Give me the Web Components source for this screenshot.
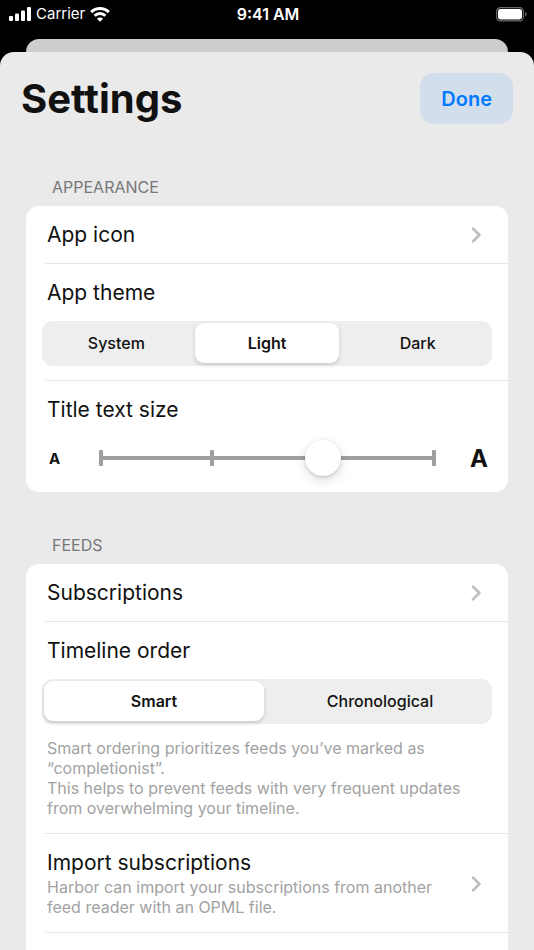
<!DOCTYPE html>
<html lang="en">
  <head>
    <meta charset="UTF-8" />
    <meta name="viewport" content="width=device-width, initial-scale=1" />
    <title>Settings</title>
    <style>
      :root {
        --color-text: #111111;
        --color-muted: #a2a2a2;
        --color-label: #77777a;
        --color-sheet: #eaeaea;
        --color-card: #ffffff;
        --color-line: #e6e6e6;
        --color-blue: #007aff;
      }

      body {
        margin: 0;
        min-height: 100vh;
        display: flex;
        flex-direction: column;
        background: #000000;
        color: var(--color-text);
        font-family: Inter, "Liberation Sans", sans-serif;
      }
    </style>
  </head>
  <body>
    <status-bar carrier="Carrier" time="9:41 AM"></status-bar>
    <settings-sheet heading="Settings">
      <settings-group label="Appearance">
        <settings-link label="App icon"></settings-link>
        <settings-row label="App theme">
          <segmented-control
            label="App theme"
            options="System,Light,Dark"
            value="Light"
          ></segmented-control>
        </settings-row>
        <settings-row label="Title text size">
          <text-size-slider label="Title text size" steps="4" value="2"></text-size-slider>
        </settings-row>
      </settings-group>
      <settings-group label="Feeds" open-ended>
        <settings-link label="Subscriptions"></settings-link>
        <settings-row label="Timeline order">
          <segmented-control
            label="Timeline order"
            options="Smart,Chronological"
            value="Smart"
          ></segmented-control>
          <span slot="note">Smart ordering prioritizes feeds you’ve marked as “completionist”.<br />This helps to prevent feeds with very frequent updates from overwhelming your timeline.</span>
        </settings-row>
        <settings-link label="Import subscriptions">
          Harbor can import your subscriptions from another feed reader with an OPML file.
        </settings-link>
        <settings-spacer></settings-spacer>
      </settings-group>
    </settings-sheet>

    <script>
      /* Status Bar Component */
      class StatusBar extends HTMLElement {
        constructor() {
          super();
          this.attachShadow({ mode: "open" });
        }

        connectedCallback() {
          this.render();
        }

        get styles() {
          return `
            <style>
              :host {
                display: grid;
                grid-template-columns: 1fr auto 1fr;
                align-items: center;
                height: 28px;
                padding: 0 7px 11px 9px;
                color: #ffffff;
                font-size: 16px;
                line-height: 20px;
              }

              svg {
                display: block;
              }

              .carrier {
                display: flex;
                align-items: center;
                gap: 5px;
              }

              .carrier span {
                font-size: 15px;
              }

              .time {
                font-weight: 600;
              }

              .battery {
                justify-self: end;
              }
            </style>
          `;
        }

        render() {
          this.shadowRoot.innerHTML = `
            ${this.styles}
            <div class="carrier">
              <svg width="22" height="14" viewBox="0 0 22 14" fill="#fff" aria-hidden="true">
                <rect x="0" y="9" width="4" height="5" rx="1" />
                <rect x="6" y="6.5" width="4" height="7.5" rx="1" />
                <rect x="12" y="3.5" width="4" height="10.5" rx="1" />
                <rect x="18" y="0" width="4" height="14" rx="1" />
              </svg>
              <span>${this.getAttribute("carrier")}</span>
              <svg width="20" height="15" viewBox="0 0 20 15" fill="none" stroke="#fff" stroke-width="2.9" aria-hidden="true">
                <path d="M1.2 5.1a12.6 12.6 0 0 1 17.6 0" />
                <path d="M4.6 8.7a7.7 7.7 0 0 1 10.800 0" />
                <path d="M10 14.800 6.900 11.700a4.400 4.400 0 0 1 6.200 0z" fill="#fff" stroke="none" />
              </svg>
            </div>
            <div class="time">${this.getAttribute("time")}</div>
            <svg class="battery" width="31" height="15" viewBox="0 0 31 15" aria-hidden="true">
              <rect x=".6" y=".6" width="26.8" height="13.3" rx="3.8" fill="none" stroke="#6b6b6b" stroke-width="1.2" />
              <rect x="2" y="2" width="24" height="10.5" rx="2.4" fill="#fff" />
              <path d="M29 5v4.6c1-.3 1.6-1.2 1.6-2.3S30 5.300 29 5z" fill="#6b6b6b" />
            </svg>
          `;
        }
      }
      customElements.define("status-bar", StatusBar);

      /* Settings Sheet Component */
      class SettingsSheet extends HTMLElement {
        constructor() {
          super();
          this.attachShadow({ mode: "open" });
        }

        connectedCallback() {
          this.render();
        }

        get styles() {
          return `
            <style>
              :host {
                flex: 1;
                display: flex;
                flex-direction: column;
              }

              .behind {
                height: 13px;
                margin: 0 26px;
                border-radius: 13px 13px 0 0;
                background: #cdcdcf;
              }

              .sheet {
                flex: 1;
                display: flex;
                flex-direction: column;
                border-radius: 14px 14px 0 0;
                background: var(--color-sheet);
              }

              .header {
                display: flex;
                align-items: center;
                justify-content: space-between;
                padding: 21px 21px 10px;
              }

              h1 {
                margin: 0;
                font-size: 40px;
                line-height: 48px;
                font-weight: 700;
              }

              .done {
                height: 51px;
                padding: 0 21px;
                border: 0;
                border-radius: 14px;
                background: #d2deec;
                color: var(--color-blue);
                font: inherit;
                font-size: 20px;
                font-weight: 600;
                cursor: pointer;
              }

              main {
                flex: 1;
                display: flex;
                flex-direction: column;
                padding: 0 26px;
              }
            </style>
          `;
        }

        render() {
          this.shadowRoot.innerHTML = `
            ${this.styles}
            <div class="behind"></div>
            <div class="sheet">
              <header class="header">
                <h1>${this.getAttribute("heading")}</h1>
                <button class="done" type="button">Done</button>
              </header>
              <main><slot></slot></main>
            </div>
          `;

          this.shadowRoot.querySelector(".done").addEventListener("click", () => {
            this.dispatchEvent(
              new CustomEvent("sheet-done", { bubbles: true, composed: true })
            );
          });
        }
      }
      customElements.define("settings-sheet", SettingsSheet);

      /* Settings Group Component */
      class SettingsGroup extends HTMLElement {
        constructor() {
          super();
          this.attachShadow({ mode: "open" });
        }

        connectedCallback() {
          this.render();
        }

        get styles() {
          return `
            <style>
              :host {
                display: flex;
                flex-direction: column;
                padding-top: 43px;
              }

              :host([open-ended]) {
                flex: 1;
              }

              h2 {
                margin: 0 26px 9px;
                color: var(--color-label);
                font-size: 16px;
                line-height: 20px;
                font-weight: 400;
                text-transform: uppercase;
              }

              .card {
                flex: 1;
                border-radius: 13px;
                background: var(--color-card);
              }

              :host([open-ended]) .card {
                border-radius: 13px 13px 0 0;
              }

              ::slotted(:not(:first-child)) {
                border-top: 1px solid var(--color-line);
              }
            </style>
          `;
        }

        render() {
          this.shadowRoot.innerHTML = `
            ${this.styles}
            <h2>${this.getAttribute("label")}</h2>
            <div class="card"><slot></slot></div>
          `;
        }
      }
      customElements.define("settings-group", SettingsGroup);

      /* Row that opens another screen */
      class SettingsLink extends HTMLElement {
        constructor() {
          super();
          this.attachShadow({ mode: "open" });
        }

        connectedCallback() {
          this.render();
        }

        get styles() {
          return `
            <style>
              :host {
                display: block;
                margin-left: 19px;
              }

              button {
                display: flex;
                align-items: center;
                justify-content: space-between;
                gap: 20px;
                width: 100%;
                padding: 15px 26px 14px 2px;
                border: 0;
                background: none;
                color: inherit;
                font: inherit;
                text-align: left;
                cursor: pointer;
              }

              .title {
                display: block;
                font-size: 21px;
                line-height: 28px;
              }

              .note {
                display: block;
                padding-bottom: 1px;
                color: var(--color-muted);
                font-size: 16px;
                line-height: 20px;
              }

              svg {
                flex: none;
              }
            </style>
          `;
        }

        render() {
          const hasNote = this.textContent.trim() !== "";

          this.shadowRoot.innerHTML = `
            ${this.styles}
            <button type="button">
              <span>
                <span class="title">${this.getAttribute("label")}</span>
                ${hasNote ? `<span class="note"><slot></slot></span>` : ""}
              </span>
              <svg width="11" height="16" viewBox="0 0 11 16" fill="none" stroke="#bebebf" stroke-width="2.7" stroke-linecap="round" stroke-linejoin="round" aria-hidden="true">
                <path d="M2 1.600 8.400 8 2 14.400" />
              </svg>
            </button>
          `;
        }
      }
      customElements.define("settings-link", SettingsLink);

      /* Row that holds a control, with an optional note under it */
      class SettingsRow extends HTMLElement {
        constructor() {
          super();
          this.attachShadow({ mode: "open" });
        }

        connectedCallback() {
          this.render();
        }

        get styles() {
          return `
            <style>
              :host {
                display: block;
                margin-left: 19px;
                padding: 15px 16px 14px 0;
              }

              h3 {
                margin: 0 0 14px 2px;
                font-size: 21px;
                line-height: 28px;
                font-weight: 400;
              }

              ::slotted([slot="note"]) {
                display: block;
                margin: 14px 0 0 2px;
                padding-bottom: 1px;
                color: var(--color-muted);
                font-size: 16px;
                line-height: 20px;
              }
            </style>
          `;
        }

        render() {
          this.shadowRoot.innerHTML = `
            ${this.styles}
            <h3>${this.getAttribute("label")}</h3>
            <slot></slot>
            <slot name="note"></slot>
          `;
        }
      }
      customElements.define("settings-row", SettingsRow);

      /* Empty row after the last one, keeps the divider */
      class SettingsSpacer extends HTMLElement {
        constructor() {
          super();
          this.attachShadow({ mode: "open" });
          this.shadowRoot.innerHTML = `
            <style>
              :host {
                display: block;
                height: 16px;
                margin-left: 19px;
              }
            </style>
          `;
        }
      }
      customElements.define("settings-spacer", SettingsSpacer);

      /* Segmented Control Component */
      class SegmentedControl extends HTMLElement {
        constructor() {
          super();
          this.attachShadow({ mode: "open" });
        }

        connectedCallback() {
          this.render();
        }

        get styles() {
          return `
            <style>
              :host {
                display: block;
                margin-left: -3px;
              }

              .track {
                display: grid;
                grid-auto-flow: column;
                grid-auto-columns: 1fr;
                gap: 6px;
                height: 40px;
                padding: 2px 2px 3px;
                border-radius: 11px;
                background: #eeeeee;
              }

              label {
                display: grid;
                place-items: center;
                border-radius: 9px;
                font-size: 16px;
                line-height: 20px;
                font-weight: 500;
                cursor: pointer;
              }

              label:has(:checked) {
                background: var(--color-card);
                box-shadow: 0 2px 4px rgba(0, 0, 0, 0.16);
                font-weight: 600;
              }

              label:has(:focus-visible) {
                outline: 2px solid var(--color-blue);
              }

              input,
              span {
                grid-area: 1 / 1;
              }

              input {
                appearance: none;
                width: 100%;
                height: 100%;
                margin: 0;
                outline: 0;
                cursor: pointer;
              }
            </style>
          `;
        }

        render() {
          const label = this.getAttribute("label");
          const value = this.getAttribute("value");
          const options = this.getAttribute("options").split(",");

          this.shadowRoot.innerHTML = `
            ${this.styles}
            <div class="track" role="radiogroup" aria-label="${label}">
              ${options
                .map(
                  (option) => `
                    <label>
                      <input type="radio" name="choice" value="${option}" ${
                        option === value ? "checked" : ""
                      } />
                      <span>${option}</span>
                    </label>
                  `
                )
                .join("")}
            </div>
          `;
        }
      }
      customElements.define("segmented-control", SegmentedControl);

      /* Text Size Slider Component */
      class TextSizeSlider extends HTMLElement {
        constructor() {
          super();
          this.attachShadow({ mode: "open" });
        }

        connectedCallback() {
          this.render();
        }

        get styles() {
          return `
            <style>
              :host {
                display: flex;
                align-items: center;
                justify-content: space-between;
                height: 40px;
                padding: 0 4px;
                font-weight: 700;
              }

              .small {
                width: 16px;
                font-size: 15px;
              }

              .large {
                width: 18px;
                font-size: 24px;
              }

              .slider {
                flex: 1;
                display: grid;
                align-items: center;
                margin: 0 18px;
              }

              .ticks,
              input {
                grid-area: 1 / 1;
              }

              /* the end ticks sit under the centre of the thumb */
              .ticks {
                display: flex;
                justify-content: space-between;
                margin: 0 16px;
                background: linear-gradient(#9f9f9f, #9f9f9f) center / 100% 4px no-repeat;
              }

              .ticks i {
                width: 4px;
                height: 16px;
                border-radius: 1px;
                background: #9f9f9f;
              }

              input {
                appearance: none;
                width: 100%;
                height: 36px;
                margin: 0;
                background: none;
                cursor: pointer;
              }

              input::-webkit-slider-thumb {
                appearance: none;
                width: 36px;
                height: 36px;
                border-radius: 50%;
                background: #ffffff;
                box-shadow: 0 4px 12px rgba(0, 0, 0, 0.14), 0 1px 3px rgba(0, 0, 0, 0.16);
              }
            </style>
          `;
        }

        render() {
          const steps = parseInt(this.getAttribute("steps")) || 2;
          const value = this.getAttribute("value");

          this.shadowRoot.innerHTML = `
            ${this.styles}
            <span class="small">A</span>
            <div class="slider">
              <div class="ticks">${"<i></i>".repeat(steps)}</div>
              <input
                type="range"
                min="0"
                max="${steps - 1}"
                step="1"
                value="${value}"
                aria-label="${this.getAttribute("label")}"
              />
            </div>
            <span class="large">A</span>
          `;
        }
      }
      customElements.define("text-size-slider", TextSizeSlider);
    </script>
  </body>
</html>
